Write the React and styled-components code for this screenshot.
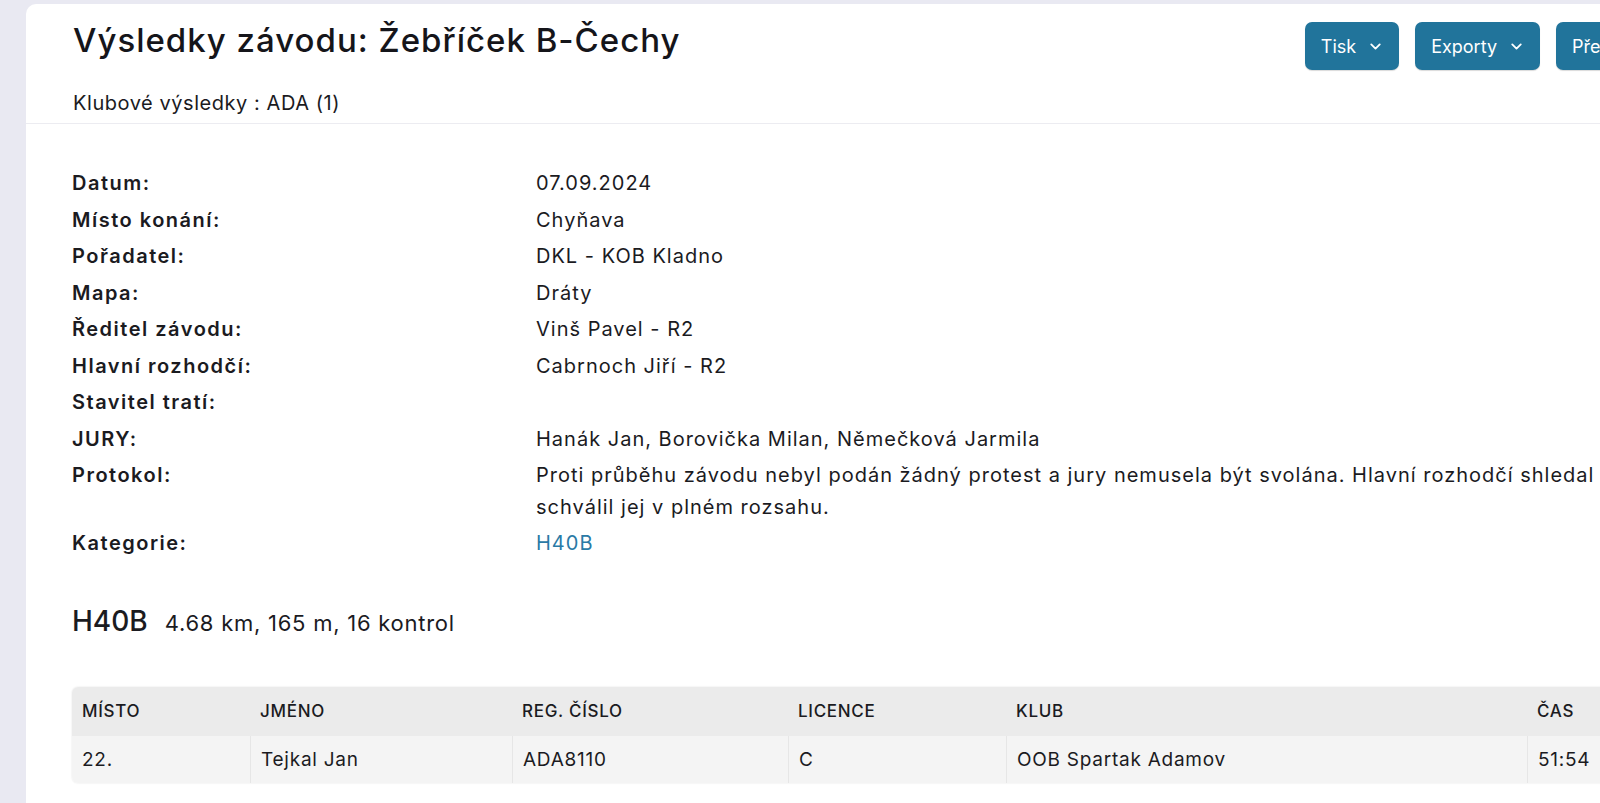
import React from 'react'
import styled, { createGlobalStyle } from 'styled-components'
import { ChevronDown } from 'lucide-react'

const GlobalStyle = createGlobalStyle`
  html, body {
    margin: 0;
    padding: 0;
    background: #e9e9f2;
    overflow: hidden;
  }
  body {
    font-family: Inter, "Noto Sans", sans-serif;
    color: #1b1b1f;
  }
`

const info = [
  ['Datum:', '07.09.2024'],
  ['Místo konání:', 'Chyňava'],
  ['Pořadatel:', 'DKL - KOB Kladno'],
  ['Mapa:', 'Dráty'],
  ['Ředitel závodu:', 'Vinš Pavel - R2'],
  ['Hlavní rozhodčí:', 'Cabrnoch Jiří - R2'],
  ['Stavitel tratí:', ''],
  ['JURY:', 'Hanák Jan, Borovička Milan, Němečková Jarmila'],
  ['Protokol:', 'Proti průběhu závodu nebyl podán žádný protest a jury nemusela být svolána. Hlavní rozhodčí shledal závod regulérním a\nschválil jej v plném rozsahu.'],
]

const columns = [
  { title: 'Místo', width: 178 },
  { title: 'Jméno', width: 262 },
  { title: 'Reg. číslo', width: 276 },
  { title: 'Licence', width: 218 },
  { title: 'Klub', width: 521 },
  { title: 'Čas', width: 160 },
]

const results = [['22.', 'Tejkal Jan', 'ADA8110', 'C', 'OOB Spartak Adamov', '51:54']]

const App = () => {
  return (
    <>
      <GlobalStyle />
      <STPage>
        <STCard>
          <STHeader>
            <div>
              <STTitle>Výsledky závodu: Žebříček B-Čechy</STTitle>
              <STSubtitle>Klubové výsledky : ADA (1)</STSubtitle>
            </div>
            <STActions>
              <STButton>Tisk <ChevronDown size={17} strokeWidth={2.6} /></STButton>
              <STButton>Exporty <ChevronDown size={17} strokeWidth={2.6} /></STButton>
              <STButton>Přehled <ChevronDown size={17} strokeWidth={2.6} /></STButton>
            </STActions>
          </STHeader>

          <STBody>
            <STInfo>
              {info.map(([label, value]) => (
                <React.Fragment key={label}>
                  <STLabel>{label}</STLabel>
                  <STValue>{value}</STValue>
                </React.Fragment>
              ))}
              <STLabel>Kategorie:</STLabel>
              <STValue><STLink href='#'>H40B</STLink></STValue>
            </STInfo>

            <STCategory>
              <h2>H40B</h2>
              <span>4.68 km, 165 m, 16 kontrol</span>
            </STCategory>

            <STTable>
              <thead>
                <tr>
                  {columns.map(c => (
                    <th key={c.title} style={{ width: c.width }}>{c.title}</th>
                  ))}
                </tr>
              </thead>
              <tbody>
                {results.map(row => (
                  <tr key={row[1]}>
                    {row.map((cell, i) => <td key={i}>{cell}</td>)}
                  </tr>
                ))}
              </tbody>
            </STTable>
          </STBody>
        </STCard>
      </STPage>
    </>
  )
}

const STPage = styled.div`
  padding: 4px 0 0 26px;
  width: 2000px;
  height: 803px;
  box-sizing: border-box;
`

const STCard = styled.div`
  background: #ffffff;
  border-radius: 10px 0 0 0;
  height: 100%;
`

const STHeader = styled.div`
  display: flex;
  justify-content: space-between;
  align-items: flex-start;
  padding: 14px 0 0 47px;
  height: 120px;
  box-sizing: border-box;
  border-bottom: 1px solid #ececf1;
`

const STTitle = styled.h1`
  margin: 0;
  font-size: 33px;
  font-weight: 500;
  letter-spacing: 1px;
  line-height: 44px;
  color: #15151a;
`

const STSubtitle = styled.div`
  margin-top: 27px;
  font-size: 20px;
  letter-spacing: 0.55px;
  line-height: 28px;
`

const STActions = styled.div`
  display: flex;
  gap: 16px;
  margin-top: 4px;
  margin-right: 320px;
`

const STButton = styled.button`
  display: flex;
  align-items: center;
  gap: 11px;
  height: 48px;
  padding: 0 15px 0 16px;
  border: none;
  border-radius: 7px;
  background: #21749b;
  color: #ffffff;
  font-family: inherit;
  font-size: 18px;
  box-shadow: 0 1px 1px rgba(0, 0, 0, 0.15);
`

const STBody = styled.div`
  padding: 44px 0 0 46px;
`

const STInfo = styled.div`
  display: grid;
  grid-template-columns: 464px 1420px;
  row-gap: 5px;
  font-size: 20px;
  letter-spacing: 1px;
  line-height: 31.5px;
`

const STLabel = styled.div`
  font-weight: 600;
  letter-spacing: 1.5px;
`

const STValue = styled.div`
  white-space: pre-line;
`

const STLink = styled.a`
  color: #2a7aa6;
  text-decoration: none;
`

const STCategory = styled.div`
  display: flex;
  align-items: baseline;
  gap: 17px;
  margin-top: 43px;
  line-height: 36px;

  h2 {
    margin: 0;
    font-size: 28px;
    font-weight: 500;
  }

  span {
    font-size: 22px;
    letter-spacing: 0.75px;
  }
`

const STTable = styled.table`
  margin-top: 46px;
  border-collapse: separate;
  border-spacing: 0;
  border-radius: 6px;
  overflow: hidden;
  box-shadow: 0 0 2px rgba(0, 0, 0, 0.12);

  th {
    background: #ebebeb;
    text-align: left;
    text-transform: uppercase;
    font-size: 17px;
    font-weight: 500;
    letter-spacing: 0.7px;
    height: 49px;
    padding: 0 10px;
    box-sizing: border-box;
  }

  td {
    background: #f4f4f4;
    font-size: 19px;
    letter-spacing: 0.75px;
    height: 47px;
    padding: 0 10px;
    border-left: 1px solid #e6e6e6;
  }

  td:first-child {
    border-left: none;
  }
`

export default App
